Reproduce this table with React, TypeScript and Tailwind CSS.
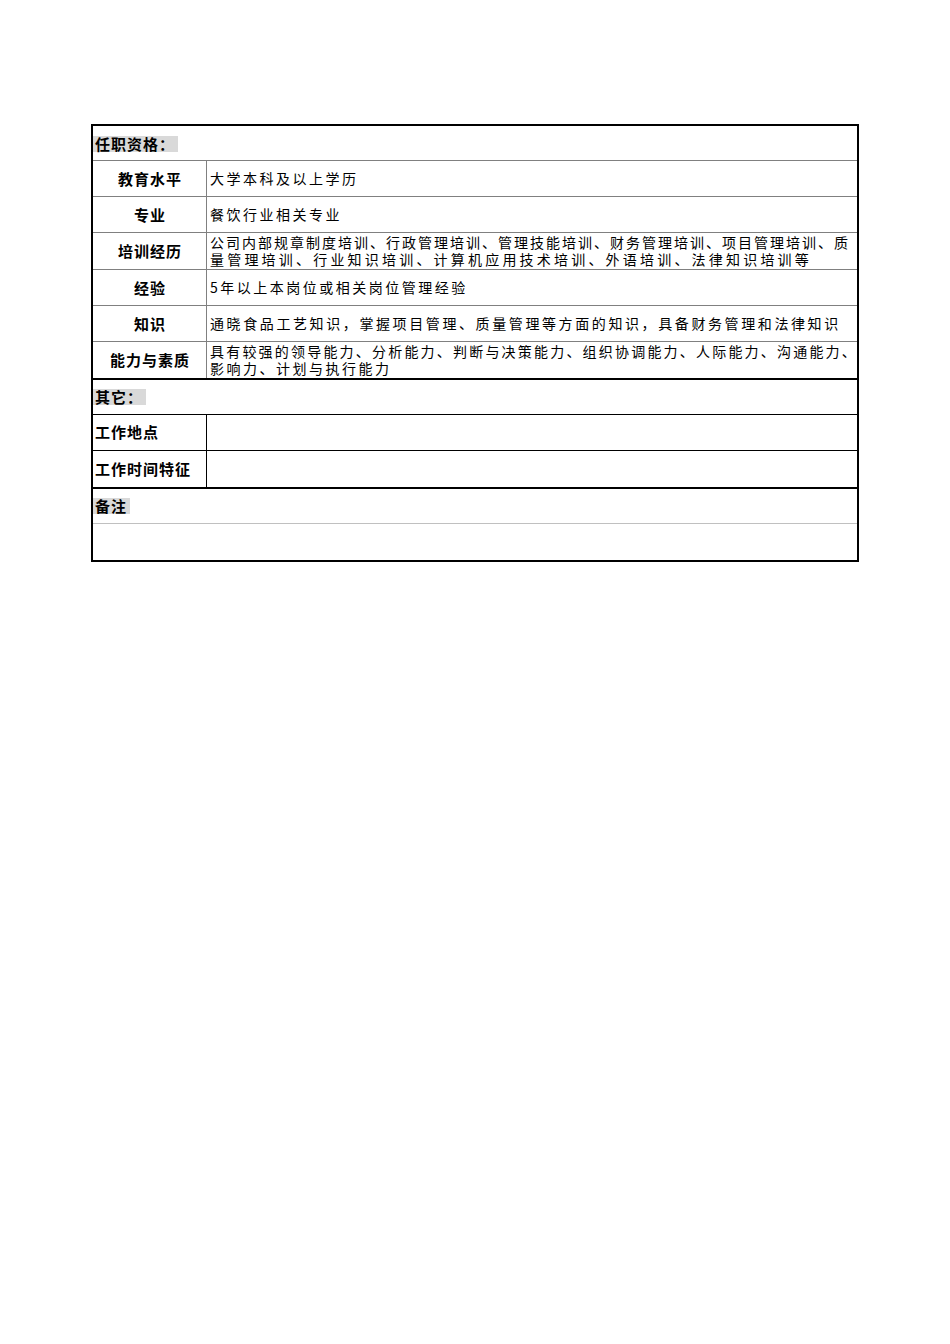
const sans = { fontFamily: '"Noto Sans CJK SC", "Noto Sans", sans-serif' };

function Label({ children }: { children: React.ReactNode }) {
  return (
    <div className="w-[114px] shrink-0 border-r border-[#808080] flex items-center justify-center text-[15px] font-bold tracking-[1px] pl-[1px] pt-[1px]">
      {children}
    </div>
  );
}

function Lines({ lines }: { lines: { text: string; track: string }[] }) {
  return (
    <div className="flex-1 min-w-0 flex flex-col justify-center pl-[3px] text-[14px] leading-[17px] whitespace-nowrap">
      {lines.map((l, i) => (
        <div key={i} className={l.track}>
          {l.text}
        </div>
      ))}
    </div>
  );
}

function Section({ children }: { children: React.ReactNode }) {
  return (
    <span className="inline-block bg-[#d9d9d9] pl-[2px] pr-[3px] leading-[16px] text-[15px] font-bold tracking-[1px]">
      {children}
    </span>
  );
}

export default function App() {
  return (
    <div className="min-h-[1344px] bg-white pt-[124px] pl-[91px] text-black" style={sans}>
      <div className="w-[768px] border-2 border-black">
        {/* 任职资格 */}
        <div className="h-[35px] border-b border-[#808080] flex items-center pt-[2px]">
          <Section>任职资格：</Section>
        </div>
        <div className="h-[36px] border-b border-[#808080] flex">
          <Label>教育水平</Label>
          <Lines lines={[{ text: '大学本科及以上学历', track: 'tracking-[2.5px]' }]} />
        </div>
        <div className="h-[36px] border-b border-[#808080] flex">
          <Label>专业</Label>
          <Lines lines={[{ text: '餐饮行业相关专业', track: 'tracking-[2.5px]' }]} />
        </div>
        <div className="h-[37px] border-b border-[#808080] flex">
          <Label>培训经历</Label>
          <Lines
            lines={[
              { text: '公司内部规章制度培训、行政管理培训、管理技能培训、财务管理培训、项目管理培训、质', track: 'tracking-[2px]' },
              { text: '量管理培训、行业知识培训、计算机应用技术培训、外语培训、法律知识培训等', track: 'tracking-[3.2px]' },
            ]}
          />
        </div>
        <div className="h-[36px] border-b border-[#808080] flex">
          <Label>经验</Label>
          <Lines lines={[{ text: '5年以上本岗位或相关岗位管理经验', track: 'tracking-[2.5px]' }]} />
        </div>
        <div className="h-[36px] border-b border-[#808080] flex">
          <Label>知识</Label>
          <Lines
            lines={[{ text: '通晓食品工艺知识，掌握项目管理、质量管理等方面的知识，具备财务管理和法律知识', track: 'tracking-[2.6px]' }]}
          />
        </div>
        <div className="h-[38px] border-b-2 border-black flex">
          <Label>能力与素质</Label>
          <Lines
            lines={[
              { text: '具有较强的领导能力、分析能力、判断与决策能力、组织协调能力、人际能力、沟通能力、', track: 'tracking-[2.2px]' },
              { text: '影响力、计划与执行能力', track: 'tracking-[2.5px]' },
            ]}
          />
        </div>

        {/* 其它 */}
        <div className="h-[35px] border-b border-black flex items-center">
          <Section>其它：</Section>
        </div>
        <div className="h-[36px] border-b border-black flex">
          <div className="w-[114px] shrink-0 border-r border-black flex items-center pl-[2px] text-[15px] font-bold tracking-[1px]">
            工作地点
          </div>
          <div className="flex-1" />
        </div>
        <div className="h-[38px] border-b-2 border-black flex">
          <div className="w-[114px] shrink-0 border-r border-black flex items-center pl-[2px] text-[15px] font-bold tracking-[1px]">
            工作时间特征
          </div>
          <div className="flex-1" />
        </div>

        {/* 备注 */}
        <div className="h-[35px] border-b border-[#c0c0c0] flex items-center">
          <Section>备注</Section>
        </div>
        <div className="h-[36px]" />
      </div>
    </div>
  );
}
